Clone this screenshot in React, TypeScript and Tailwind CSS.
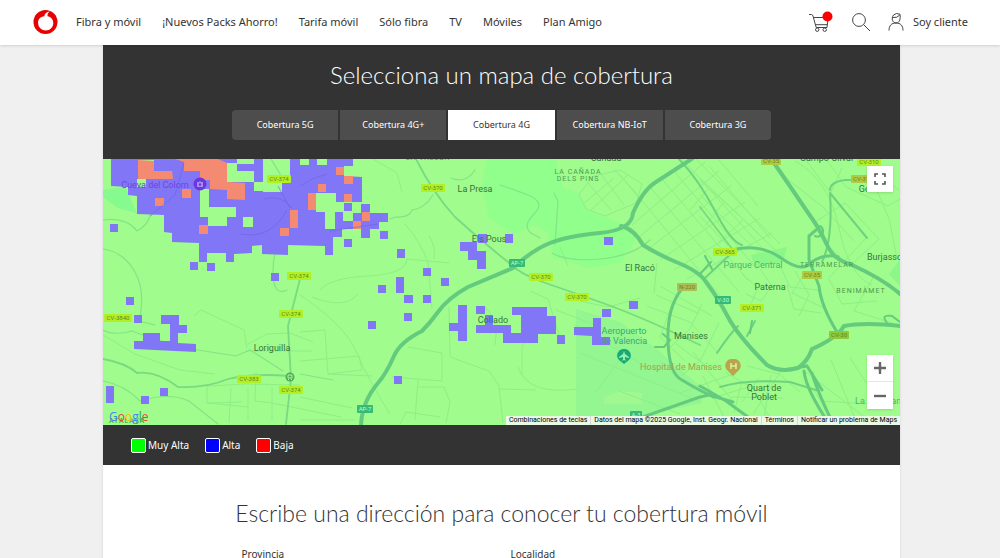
import React from 'react';

const navLinks = ['Fibra y móvil', '¡Nuevos Packs Ahorro!', 'Tarifa móvil', 'Sólo fibra', 'TV', 'Móviles', 'Plan Amigo'];

const tabs = ['Cobertura 5G', 'Cobertura 4G+', 'Cobertura 4G', 'Cobertura NB-IoT', 'Cobertura 3G'];

const legend = [
  { name: 'Muy Alta', color: 'bg-[#00ff00]' },
  { name: 'Alta', color: 'bg-[#0000ff]' },
  { name: 'Baja', color: 'bg-[#ff0000]' },
];

// x, y, width, height
const blueCells = [
  [110, 224, 8, 8], [190, 262, 8, 8], [207, 263, 8, 8], [271, 273, 8, 8],
  [344, 239, 8, 8], [380, 231, 8, 8], [344, 203, 8, 8], [362, 204, 8, 8], [397, 249, 8, 9], [423, 268, 8, 8],
  [441, 278, 8, 8], [396, 277, 8, 16], [378, 285, 8, 8], [404, 295, 9, 8], [423, 295, 8, 8],
  [404, 313, 8, 8], [368, 321, 8, 8], [394, 376, 8, 8], [449, 323, 9, 8], [458, 305, 9, 36],
  [476, 306, 9, 8], [478, 234, 9, 9], [505, 234, 8, 9], [604, 237, 9, 8],
  [557, 335, 8, 9], [602, 309, 9, 8], [629, 301, 9, 8],
  [126, 297, 8, 8], [134, 315, 8, 8], [106, 386, 8, 17], [141, 396, 8, 8], [160, 388, 8, 8],
];

const redCells = [
  [155, 198, 9, 8], [182, 189, 9, 9], [199, 225, 9, 9], [290, 210, 8, 18], [280, 228, 9, 8],
  [336, 167, 8, 8], [344, 176, 9, 8], [318, 184, 8, 8], [344, 194, 8, 8], [308, 193, 8, 17],
  [362, 212, 8, 9], [353, 221, 8, 8],
];

const shields: [string, number, number, string?][] = [
  ['CV-374', 279, 179], ['CV-370', 433, 188], ['CV-374', 299, 276], ['CV-374', 291, 314],
  ['CV-3840', 118, 318], ['CV-383', 249, 379], ['CV-374', 291, 390], ['CV-370', 541, 277],
  ['CV-370', 577, 297], ['CV-365', 725, 252], ['CV-371', 752, 308], ['CV-310', 869, 162],
  ['CV-35', 771, 161, '#b0ca42'], ['CV-31', 861, 179, '#b0ca42'], ['CV-35', 812, 275, '#b0ca42'], ['CV-30', 839, 335, '#8fc83b'],
  ['N-220', 687, 287, '#b0bc59'], ['AP-7', 517, 263, '#35bb78'], ['AP-7', 365, 409, '#35bb78'],
  ['V-30', 723, 300, '#35bb78'], ['A-3', 636, 415, '#35bb78'],
];

const places: [string, number, number, number, string?, number?][] = [
  ['La Presa', 475, 192, 9], ['Els Pous', 489, 242, 9], ['El Racó', 640, 271, 9],
  ['LA CAÑADA', 578, 174, 7, '#4b9a53', 1], ['DELS PINS', 578, 181, 7, '#4b9a53', 1],
  ['Cañada', 606, 161, 9], ['LA VALLSA', 428, 160, 7, '#4b9a53', 1], ['Campo Olivar', 827, 161, 9],
  ['Gódella', 874, 192, 9], ['TERRAMELAR', 827, 267, 7, '#4b9a53', 1], ['BENIMÀMET', 861, 293, 7, '#4b9a53', 1],
  ['Burjassot', 886, 260, 9], ['Paterna', 770, 290, 9], ['Parque Central', 753, 268, 9, '#43b870'],
  ['Manises', 691, 339, 9], ['Loriguilla', 272, 351, 9], ['Collado', 493, 323, 9],
  ['Quart de', 764, 391, 9], ['Poblet', 764, 400, 9], ['Aeropuerto', 624, 334, 9, '#35ac77'],
  ['de Valencia', 624, 344, 9, '#35ac77'], ['Hospital de Manises', 681, 370, 9, '#a9a14d'],
  ['La Fuensanta', 882, 404, 9, '#43b870'], ['Cueva del Colom', 155, 188, 9, '#7043df'],
  ['ATALAYA', 127, 423, 7, '#38903f', 1],
];

const CoverageMap: React.FC = () => {
  return (
    <svg viewBox="103 159 797 266" preserveAspectRatio="xMidYMid slice" className="block h-full w-full" role="img" aria-label="Cobertura 4G">
      <rect x="103" y="159" width="797" height="266" fill="#a0fc8c" />

      {/* Parks and the airport */}
      <path d="M487 159H555L563 188 580 194 586 210 635 229 634 243 620 263 590 268 553 257 548 233 535 225 513 234 489 218 482 187Z" fill="#90ff8c" />
      <path d="M103 190L125 187 137 213 118 208 103 197Z" fill="#86f98f" />
      <path d="M576 309L620 322 658 350 702 388 702 403 626 419 576 424Z" fill="#93f690" />
      <path d="M604 397L620 391 642 393 642 404 604 404Z" fill="#a1f890" />
      <path d="M751 255L787 247 783 262 754 266ZM889 274L900 260V286Z" fill="#8bf789" />

      {/* Local streets */}
      <g fill="none" stroke="#8eef87" strokeWidth="1">
        <path d="M640 198L728 306M651 188L739 292M661 178L748 280M672 169L757 269M682 159L767 253M696 159L780 244M632 225L705 162M639 237L719 171M648 249L732 185M660 260L745 202M674 270L760 218M687 279L772 233" />
        <path d="M579 194L594 176 620 170 642 184 636 203 605 216 586 209ZM583 204L614 178M590 211L628 175M588 183L611 210M601 174L624 205M614 169L637 194" />
        <path d="M700 178L764 239M710 167L770 238M719 160L758 206M700 195L759 253M700 216L728 246M708 189L690 210M724 202L705 226M743 220L719 242" />
        <path d="M795 161Q829 180 839 228T872 285M805 159L827 188 866 238 829 278M785 177L824 208 854 241M815 222L845 203 879 239 850 266 824 242M874 183L889 219 897 258M826 159L846 187 888 206 900 199M842 168L830 194M861 159L899 190" />
        <path d="M742 274L758 288 750 306M760 269L772 286 761 301 746 294M780 266L790 287 818 290M787 284L794 309 821 313M795 271L809 295 799 316M829 279L842 304 877 301M874 276L854 311 892 323M803 276L792 293 826 309" />
        <path d="M656 295L700 314M660 286L712 316M647 306L690 322 717 352M670 310L660 337 685 361M702 304L690 329 667 350M719 323L700 361 681 376M676 344L712 370M693 352L732 400M680 393L733 374M712 398L752 386M703 376L724 417" />
        <path d="M725 372L754 389 773 424M742 381L734 413M731 397L783 398M747 366L779 374 800 392M759 378L742 402M771 375L764 418M783 368L753 414M806 372L871 422M831 360L854 416M850 358L871 390M820 401L870 404M813 389L833 419" />
        <path d="M248 344L267 334 290 333 313 342M246 351H312M256 372L255 401 272 403 341 417M207 386L245 384 300 385M207 403L242 402M231 388L229 423M248 388V421M272 387V421M207 385V403L248 407M194 316L201 310 244 330 247 348M103 335L135 354 180 370 215 374" />
        <path d="M300 332L325 330 328 374 362 370 359 356 300 361M328 374L372 376M392 377L442 381 442 353 408 347M418 380L415 420M418 387H444L450 402 446 423M400 424L406 412 440 417M300 397L352 408M300 420H355" />
        <path d="M449 307L450 357 489 371 499 386 503 423M484 306Q500 320 495 345M518 367Q528 396 578 389M500 389L536 390M522 375L522 347 532 319M560 247L568 266M556 310L608 330M575 325L650 369M595 393L625 353M580 353L699 401M619 391L680 414" />
        <path d="M373 159L397 173 402 192M405 224Q421 242 428 263L432 308M300 295Q345 325 357 353T390 414M320 290Q330 278 368 276T407 259M407 259L449 263M434 259Q436 246 429 236M358 294Q345 310 312 297" />
        <path d="M700 181Q732 207 775 250M620 175L640 199M657 263L654 293M530 291L548 299 559 335M580 301L608 307 640 298" />
      </g>

      {/* Rivers and secondary roads */}
      <g fill="none" stroke="#82e486" strokeWidth="1.2" strokeLinecap="round">
        <path d="M103 220Q126 217 137 231Q147 226 150 216L175 195 197 150M240 234Q271 240 287 208M264 199L278 195 290 206" />
        <path d="M103 249Q124 252 135 272T139 321L155 325M103 330Q115 336 132 331Q152 339 180 346L198 350 236 356 250 350 283 371M103 381Q125 385 140 401Q169 392 189 401L218 424" />
        <path d="M390 219L396 217Q409 218 412 210Q424 209 433 195M451 178Q466 184 475 170M500 185Q510 188 528 195T534 214T531 233L540 238M554 193L558 201 555 245M552 253Q567 262 600 259T650 240M300 374L333 380" />
        <path d="M271 159Q285 181 291 197T285 230T273 272T287 290" />
      </g>
      <g fill="none" stroke="#78da81" strokeWidth="1.8" strokeLinecap="round">
        <path d="M103 359Q126 363 137 373Q156 370 178 387Q207 388 228 379Q252 373 290 376" />
        <path d="M416 159Q433 193 455 217Q480 240 508 262Q520 274 540 281T600 302T700 345M301 275L288 326 291 379 286 424M700 207L736 254" />
      </g>
      <g fill="none" stroke="#6fd37e" strokeWidth="2" strokeLinecap="round">
        <path d="M679 159Q699 180 715 211T742 245M830 193Q833 240 822 262M830 190Q830 182 845 180L882 180M830 193L867 238M736 249L705 278M717 353Q729 335 738 326M720 387Q745 379 790 382L819 391M755 321L747 336" />
      </g>

      {/* Motorways */}
      <g fill="none" stroke="#64cb7e" strokeLinecap="round">
        <path d="M361 425Q362 402 378 383Q386 374 394 356Q400 342 422 331Q430 323 438 312Q448 298 468 287L513 268Q532 250 550 243T600 233T633 213Q643 190 656 182L693 158" strokeWidth="4" />
        <path d="M621 226Q634 229 643 245Q657 254 676 262Q699 271 706 282Q718 298 728 317T767 365Q780 373 798 368Q808 361 812 349Q837 338 844 326Q865 322 900 326" strokeWidth="4" />
        <path d="M774 163L783 176 813 220Q820 230 827 245T850 264Q883 279 900 294" strokeWidth="4" />
        <path d="M732 250Q760 243 781 258T810 263Q825 253 838 257M816 230L809 236 809 260 819 286Q821 306 837 332M804 371Q806 390 830 425M812 373Q816 388 833 424M784 370L807 366 822 390" strokeWidth="3" />
        <path d="M681 290Q667 308 668 341T682 380Q700 391 714 397M640 418L700 397M700 386L726 401 759 425M700 397L709 395 733 402" strokeWidth="3" />
        <path d="M663 334L670 340 664 347 655 347M705 256L712 269M700 274L711 262M820 226A5 5 0 1 1 815 236M887 323Q880 314 892 316L900 322M752 321L750 333" strokeWidth="2" />
      </g>

      {/* Coverage layer */}
      <g fill="#8177f6">
        <path fillRule="evenodd" d="M111 159H353V166H344V176L362 177V202H336V193H316V212H325V229H335V212H343V221H353V213H361V204H370V213H388V222H379V229H370V238H361V229H342V237H333V255H325V246L288 245V255L262 254V245L252 246V253L234 254V262H226V253L207 253V262H199V243L172 242V233L164 232V215L137 214V196L128 195V187L111 186ZM138 160H154V171H172V179H138ZM137 179H146V187H137ZM227 163H237V171H254V182H227ZM237 159H254V164H237ZM263 159H290V183H282V192H263V191H254V182H263ZM300 159H309V165H300ZM317 159H327V165H317ZM200 189H209V207H236V217H227V226H208V217H200ZM243 217H253V227H243Z" />
        <path d="M460 242H477V251H486V269H477V260H468V251H460ZM512 307H547V316H556V334H538V343H503V333H476V325H485V315H493V325H511V333H521V315H512ZM574 327H593V318H601V337H610V345H592V336L574 335ZM161 315H179V325H187V333H178V343L196 344V352L134 349V341H143V333L160 333V341H170V324H161Z" />
        {blueCells.map(([x, y, w, h]) => (
          <rect key={`${x}-${y}`} x={x} y={y} width={w} height={h} />
        ))}
      </g>
      <g fill="#f58a72">
        <path d="M138 160L154 161V171H172L173 179H138ZM175 159H218L227 163V182L245 183V200L227 199V190L210 189V180H200V171H184V162Z" />
        {redCells.map(([x, y, w, h]) => (
          <rect key={`${x}-${y}`} x={x} y={y} width={w} height={h} />
        ))}
      </g>
      <g fill="none" stroke="#6d62dd" strokeWidth="1" opacity="0.6">
        <path d="M150 216L175 195 184 163M240 234Q271 240 287 210M264 199Q281 194 292 208M278 186L290 208M300 186Q313 177 327 174M330 231L378 224" />
      </g>

      {/* Labels */}
      <g fontFamily="Roboto, sans-serif" textAnchor="middle">
        {shields.map(([text, x, y, color]) => (
          <g key={`${text}-${x}`}>
            <rect x={x - text.length * 2} y={y - 4} width={text.length * 4} height="8" rx="1" fill={color || '#b3ef25'} />
            <text x={x} y={y + 2} fontSize="6" fill={color === '#35bb78' ? '#c2f9c8' : '#588d22'}>{text}</text>
          </g>
        ))}
        {places.map(([text, x, y, size, color, spacing]) => (
          <text key={text} x={x} y={y} fontSize={size} fill={color || '#36753a'} letterSpacing={spacing || 0}>{text}</text>
        ))}
      </g>

      {/* Pins */}
      <path d="M624 349A6.5 6.5 0 0 1 629 360L624 364 619 360A6.5 6.5 0 0 1 624 349Z" fill="#16aa79" />
      <path d="M624 351L625 354 629 357V358L625 357V359L626 361 624 360 622 361 623 359V357L619 358V357L623 354Z" fill="#9aefad" />
      <path d="M733 359A6.7 6.7 0 0 1 738 371L733 376 728 371A6.7 6.7 0 0 1 733 359Z" fill="#baa54d" />
      <path d="M731 363V369M736 363V369M731 366H736" fill="none" stroke="#d8f5a0" strokeWidth="1.5" />
      <circle cx="200" cy="184" r="6.5" fill="#6d35df" />
      <path d="M197 182H199L200 181 201 182H203V187H197Z" fill="#a58df2" />
      <circle cx="200" cy="184.5" r="1.2" fill="#6d35df" />
      <circle cx="290" cy="377" r="4.5" fill="#4fae56" />
      <path d="M288 375H292V378H288ZM288 380L289 379M292 380L291 379" fill="none" stroke="#b4f6a2" strokeWidth="1" />
    </svg>
  );
};

const App: React.FC = () => {
  return (
    <div className="min-h-screen bg-[#f0f0f0] font-['Noto_Sans',sans-serif] text-[#333]">
      {/* Header */}
      <header className="relative flex h-[45px] items-center bg-white px-8 pb-px shadow">
        <a href="#" aria-label="Vodafone" className="mr-[18px]">
          <svg viewBox="0 0 26 26" className="h-[26px] w-[26px]">
            <circle cx="13.5" cy="13" r="12" fill="#e60000" />
            <path d="M17.8 2.2C14.8 2.8 12.5 4.7 12.3 7.2C8.5 7.5 6 10.3 6 13.8A7.7 7.7 0 0 0 13.7 21.5C18 21.5 21.3 18.3 21.3 14C21.3 10.5 19 7.9 15.5 7.3C15.3 5.1 16.3 3.2 17.8 2.2Z" fill="#fff" />
          </svg>
        </a>
        <nav className="flex items-center gap-[21px] whitespace-nowrap text-[11px]">
          {navLinks.map((link) => (
            <a key={link} href="#">{link}</a>
          ))}
        </nav>
        <div className="ml-auto flex items-center gap-[17px] text-[11px]">
          <button aria-label="Carrito">
            <svg viewBox="0 0 26 22" className="block h-[22px] w-[26px]" fill="none" stroke="#444" strokeWidth="1">
              <path d="M1 3.5H3.5Q4.5 3.5 5 5L8.2 16.5H19L20.2 6.5H5.5M7.5 13.7H19.3" />
              <circle cx="9.2" cy="18.7" r="1.7" />
              <circle cx="16.7" cy="18.7" r="1.7" />
              <circle cx="19.5" cy="5.5" r="5" fill="#f00" stroke="none" />
            </svg>
          </button>
          <button aria-label="Buscar">
            <svg viewBox="0 0 20 20" className="block h-5 w-5" fill="none" stroke="#444" strokeWidth="1">
              <circle cx="8" cy="8" r="6.4" />
              <path d="M12.7 12.7L19 19" />
            </svg>
          </button>
          <a href="#" className="flex items-center gap-[9px]">
            <svg viewBox="0 0 16 20" className="block h-5 w-4" fill="none" stroke="#444" strokeWidth="1">
              <path d="M1 18.5C1 13.5 3.5 11 8 11S15 13.5 15 18.5M12 2.2Q8 0.5 5.5 3C2.8 6.5 4.8 11 8 11C11.8 11 12.7 6.5 12 2.2ZM4.3 5.5Q9.5 6.2 11.8 3" />
            </svg>
            Soy cliente
          </a>
        </div>
      </header>

      <main className="pl-[103px] pr-[100px]">
        <div className="bg-white shadow">
          {/* Coverage selector */}
          <section className="bg-[#333] px-4 pb-[19px] pt-[14px] text-white">
            <h1 className="text-center font-['Lato',sans-serif] text-[24px] font-light leading-8">Selecciona un mapa de cobertura</h1>
            <div className="mx-auto mt-[19px] grid max-w-[539px] grid-cols-5 gap-[2px] overflow-hidden rounded">
              {tabs.map((tab) => (
                <button key={tab} className={tab === 'Cobertura 4G' ? 'h-[30px] bg-white text-[9px] text-[#333]' : 'h-[30px] bg-[#4d4d4d] text-[9px]'}>
                  {tab}
                </button>
              ))}
            </div>
          </section>

          {/* Map */}
          <section className="relative h-[266px] overflow-hidden font-['Roboto',sans-serif]">
            <CoverageMap />
            <button aria-label="Pantalla completa" className="absolute right-[7px] top-[7px] flex h-[26px] w-[26px] items-center justify-center bg-white shadow-sm">
              <svg viewBox="0 0 12 12" className="h-3 w-3" fill="none" stroke="#555" strokeWidth="1.6">
                <path d="M1 4V1H4M8 1H11V4M11 8V11H8M4 11H1V8" />
              </svg>
            </button>
            <div className="absolute bottom-4 right-[7px] w-[26px] divide-y divide-gray-200 bg-white shadow-sm">
              <button aria-label="Acercar" className="flex h-[27px] w-full items-center justify-center">
                <svg viewBox="0 0 12 12" className="h-3 w-3" stroke="#666" strokeWidth="2.4">
                  <path d="M6 0V12M0 6H12" />
                </svg>
              </button>
              <button aria-label="Alejar" className="flex h-[27px] w-full items-center justify-center">
                <svg viewBox="0 0 12 12" className="h-3 w-3" stroke="#666" strokeWidth="2.4">
                  <path d="M0 6H12" />
                </svg>
              </button>
            </div>
            <a href="#" className="absolute bottom-0 left-[6px] font-['Open_Sans',sans-serif] text-[12px] font-medium leading-4">
              <span className="text-[#4285f4]">G</span>
              <span className="text-[#ea4335]">o</span>
              <span className="text-[#fbbc04]">o</span>
              <span className="text-[#4285f4]">g</span>
              <span className="text-[#34a853]">l</span>
              <span className="text-[#ea4335]">e</span>
            </a>
            <div className="absolute bottom-0 right-0 flex h-[9px] items-center divide-x divide-gray-300 whitespace-nowrap bg-[#e9f9e5] text-[7px] leading-[9px] text-black">
              <button className="px-[3px]">Combinaciones de teclas</button>
              <span className="px-[3px]">Datos del mapa ©2025 Google, Inst. Geogr. Nacional</span>
              <a href="#" className="px-[3px]">Términos</a>
              <a href="#" className="px-[3px]">Notificar un problema de Maps</a>
            </div>
          </section>

          {/* Legend */}
          <ul className="flex h-10 items-center gap-4 bg-[#333] px-7 pt-px text-[10px] text-white">
            {legend.map((item) => (
              <li key={item.name} className="flex items-center gap-[2px]">
                <span className={`h-[15px] w-[15px] rounded-xs border border-white ${item.color}`}></span>
                {item.name}
              </li>
            ))}
          </ul>

          {/* Address form */}
          <section className="px-4 pb-10 pt-7">
            <h2 className="text-center font-['Lato',sans-serif] text-[23px] font-light leading-10">
              Escribe una dirección para conocer tu cobertura móvil
            </h2>
            <form className="mx-auto mt-3 grid max-w-[520px] grid-cols-2 text-[10px]">
              <div className="flex flex-col gap-2 pr-5">
                <label htmlFor="provincia" className="leading-[18px]">Provincia</label>
                <select id="provincia" className="h-8 rounded border border-gray-400 bg-white"></select>
              </div>
              <div className="flex flex-col gap-2 pl-[9px]">
                <label htmlFor="localidad" className="leading-[18px]">Localidad</label>
                <select id="localidad" className="h-8 rounded border border-gray-400 bg-white"></select>
              </div>
            </form>
          </section>
        </div>
      </main>
    </div>
  );
};

export default App;
